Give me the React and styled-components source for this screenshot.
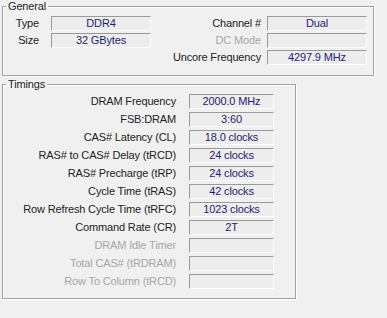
import styled, { createGlobalStyle } from "styled-components";

const Global = createGlobalStyle`
  html, body {
    margin: 0;
    background: #f0f0f0;
  }
  body {
    font-family: "Liberation Sans", Arial, sans-serif;
    font-size: 11px;
    letter-spacing: -0.15px;
    color: #222;
  }
`;

const Page = styled.div`
  width: 387px;
  height: 318px;
  padding: 0 0 0 2px;
  box-sizing: border-box;
  display: flex;
  flex-direction: column;
`;

const Group = styled.fieldset`
  margin: ${(p) => p.$top}px 0 0 0;
  width: ${(p) => p.$width}px;
  box-sizing: border-box;
  border: 1px solid #a0a0a0;
  box-shadow: 1px 1px 0 #fff, inset 1px 1px 0 #fff;
  padding: ${(p) => p.$pad};
  min-width: 0;
`;

const Legend = styled.legend`
  margin-left: 3px;
  padding: 0 2px;
  line-height: 13px;
  color: #222;
`;

const GeneralGrid = styled.div`
  display: grid;
  grid-template-columns: 36px 112px 1fr 100px;
  grid-auto-rows: 15px;
  row-gap: 2px;
`;

const Label = styled.div`
  text-align: right;
  line-height: 15px;
  white-space: nowrap;
  padding-right: ${(p) => p.$gap || 0}px;
  color: ${(p) => (p.$disabled ? "#a6a6a6" : "#222")};
  grid-column: ${(p) => p.$col || "auto"};
`;

const Value = styled.div`
  box-sizing: border-box;
  height: 15px;
  width: ${(p) => p.$w}px;
  margin-left: ${(p) => p.$ml || 0}px;
  background: #ededed;
  border-top: 1px solid #9a9a9a;
  border-left: 1px solid #9a9a9a;
  border-right: 1px solid #fdfdfd;
  border-bottom: 1px solid #fdfdfd;
  color: #1e1e6e;
  text-align: center;
  line-height: 13px;
  grid-column: ${(p) => p.$col || "auto"};
`;

const TimingRow = styled.div`
  display: flex;
  align-items: center;
  height: 15px;
  margin-bottom: 3px;
  &:last-child {
    margin-bottom: 0;
  }
`;

const TimingLabel = styled.div`
  width: 173px;
  text-align: right;
  white-space: nowrap;
  line-height: 15px;
  color: ${(p) => (p.$disabled ? "#a6a6a6" : "#222")};
`;

const timings = [
  ["DRAM Frequency", "2000.0 MHz"],
  ["FSB:DRAM", "3:60"],
  ["CAS# Latency (CL)", "18.0 clocks"],
  ["RAS# to CAS# Delay (tRCD)", "24 clocks"],
  ["RAS# Precharge (tRP)", "24 clocks"],
  ["Cycle Time (tRAS)", "42 clocks"],
  ["Row Refresh Cycle Time (tRFC)", "1023 clocks"],
  ["Command Rate (CR)", "2T"],
  ["DRAM Idle Timer", "", true],
  ["Total CAS# (tRDRAM)", "", true],
  ["Row To Column (tRCD)", "", true],
];

export default function App() {
  return (
    <>
      <Global />
      <Page>
        <Group $top={0} $width={372} $pad="3px 6px 10px 0">
          <Legend>General</Legend>
          <GeneralGrid>
            <Label>Type</Label>
            <Value $w={100} $ml={12}>DDR4</Value>
            <Label $gap={6}>Channel #</Label>
            <Value $w={100}>Dual</Value>

            <Label>Size</Label>
            <Value $w={100} $ml={12}>32 GBytes</Value>
            <Label $gap={6} $disabled>DC Mode</Label>
            <Value $w={100}></Value>

            <Label $col="3" $gap={6}>Uncore Frequency</Label>
            <Value $w={100} $col="4">4297.9 MHz</Value>
          </GeneralGrid>
        </Group>
        <Group $top={2} $width={294} $pad="3px 0 9px 0">
          <Legend>Timings</Legend>
          {timings.map(([k, v, dis]) => (
            <TimingRow key={k}>
              <TimingLabel $disabled={dis}>{k}</TimingLabel>
              <Value $w={85} $ml={13}>{v}</Value>
            </TimingRow>
          ))}
        </Group>
      </Page>
    </>
  );
}
